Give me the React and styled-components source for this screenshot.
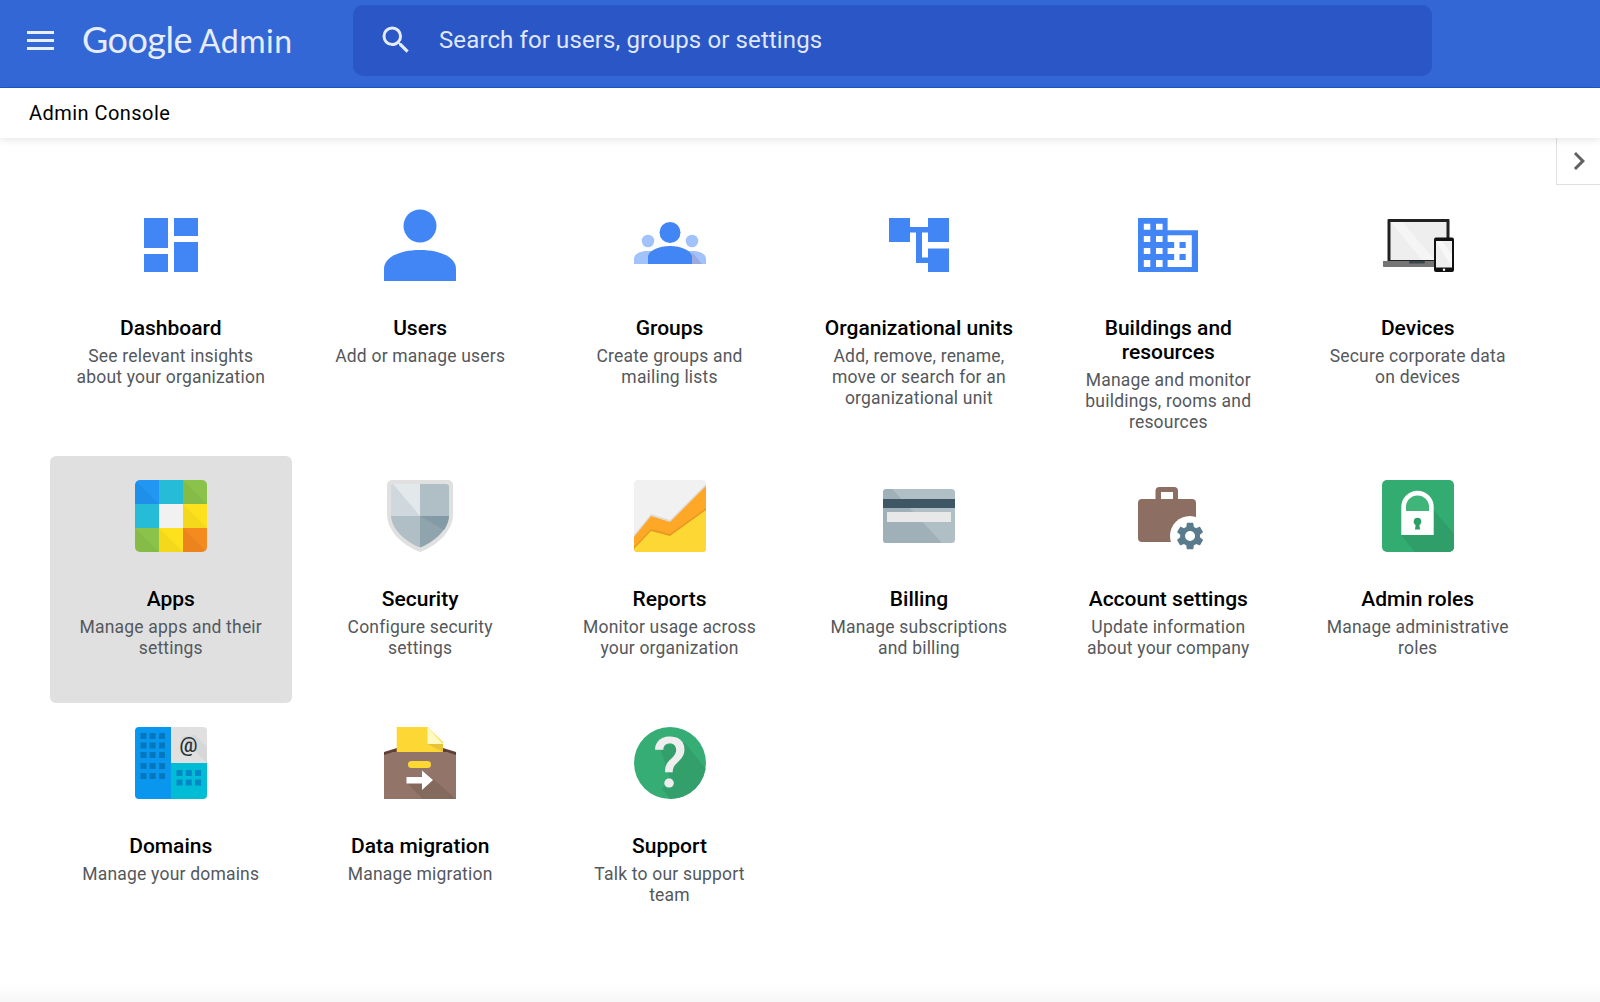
import React from "react";
import styled, { createGlobalStyle } from "styled-components";

const Global = createGlobalStyle`
  html, body { margin: 0; padding: 0; background: #fff; height: 100%; }
  #root { height: 100%; }
  * { box-sizing: border-box; }
`;

const Page = styled.div`
  position: relative;
  height: 1002px;
  overflow: hidden;
  display: flex;
  flex-direction: column;
  font-family: Roboto, "Liberation Sans", sans-serif;
  background: #fff;
`;
const TopBar = styled.header`
  height: 88px;
  flex: none;
  display: flex;
  align-items: center;
  background: #3367d6;
  border-bottom: 1px solid #1a56cf;
`;
const MenuButton = styled.div`
  width: 27px;
  height: 19px;
  margin-left: 27px;
  margin-bottom: 6px;
  flex: none;
  display: flex;
  flex-direction: column;
  justify-content: space-between;
`;
const MenuBar = styled.span`
  display: block;
  height: 3px;
  background: #e9effb;
`;
const Logo = styled.div`
  width: 299px;
  padding-left: 28px;
  flex: none;
  display: flex;
  align-items: baseline;
  gap: 7px;
  color: #e6edfa;
  font-family: Lato, sans-serif;
  line-height: 44px;
  margin-bottom: 8px;
`;
const LogoWord = styled.span`
  font-size: ${(p) => p.$size};
  letter-spacing: ${(p) => p.$spacing};
`;
const SearchBox = styled.div`
  width: 1079px;
  height: 71px;
  margin-bottom: 7px;
  flex: none;
  display: flex;
  align-items: center;
  padding-left: 25px;
  gap: 25px;
  background: #2a56c6;
  border-radius: 10px;
  color: #dfe7f8;
  font-size: 24px;
  letter-spacing: 0.12px;
`;
const SearchIcon = styled.svg`
  width: 36px;
  height: 36px;
  flex: none;
  fill: #e6edfa;
`;
const SubBar = styled.div`
  position: relative;
  z-index: 2;
  height: 50px;
  flex: none;
  display: flex;
  align-items: center;
  padding-left: 29px;
  padding-bottom: 1px;
  background: #fff;
  box-shadow: 0 2px 8px rgba(0, 0, 0, 0.1);
  color: #000;
  font-size: 20px;
  letter-spacing: 0.45px;
`;
const SideToggle = styled.div`
  position: absolute;
  top: 138px;
  right: 0;
  width: 44px;
  height: 47px;
  display: flex;
  align-items: center;
  justify-content: center;
  background: #fff;
  border-left: 1px solid #e0e0e0;
  border-bottom: 1px solid #e0e0e0;
`;
const Chevron = styled.svg`
  width: 36px;
  height: 36px;
  fill: #616161;
`;
const Grid = styled.main`
  display: grid;
  grid-template-columns: repeat(6, 242.5px);
  column-gap: 6.9px;
  padding: 47px 0 0 49.5px;
`;
const Tile = styled.div`
  min-height: 247px;
  padding: 24px 24px 23px;
  display: flex;
  flex-direction: column;
  align-items: center;
  text-align: center;
  border-radius: 6px;
  background: ${(p) => (p.$active ? "#e0e0e0" : "transparent")};
`;
const IconSvg = styled.svg`
  width: 72px;
  height: 72px;
  flex: none;
  display: block;
  margin-bottom: 35px;
  overflow: visible;
`;
const Title = styled.div`
  font-size: 21px;
  font-weight: 500;
  line-height: 24px;
  color: #000;
`;
const Desc = styled.div`
  margin-top: 6px;
  font-size: 17.5px;
  line-height: 21px;
  color: #54585c;
  letter-spacing: 0.2px;
`;
const BottomFade = styled.div`
  margin-top: auto;
  height: 18px;
  flex: none;
  background: linear-gradient(#fff, #f7f7f7);
`;

const Svg = ({ children }) => <IconSvg viewBox="0 0 72 72">{children}</IconSvg>;

const blue = "#4285f4";

const DashboardIcon = () => (
  <Svg>
    <path fill={blue} d="M9 39h24V9H9zm0 24h24V45H9zm30 0h24V33H39zM39 9v18h24V9z" />
  </Svg>
);
const UsersIcon = () => (
  <Svg>
    <circle cx="36" cy="17" r="16.5" fill={blue} />
    <path fill={blue} d="M0 72V60C0 48 16 41 36 41s36 7 36 19v12z" />
  </Svg>
);
const GroupsIcon = () => (
  <Svg>
    <circle cx="14" cy="32" r="6.3" fill="#a1c2fa" />
    <circle cx="58" cy="32" r="6.3" fill="#a1c2fa" />
    <path fill="#a1c2fa" d="M0 55v-5c0-5 6-8 14-8h44c8 0 14 3 14 8v5z" />
    <path fill="#9aa9e0" d="M58 43l0 12h10z" />
    <circle cx="36" cy="23.5" r="10.5" fill={blue} />
    <path fill={blue} d="M14 55v-7c0-6 10-11 22-11s22 5 22 11v7z" />
  </Svg>
);
const OrgIcon = () => (
  <Svg>
    <path
      fill={blue}
      d="M6 9h21v9h18V9h21v24H45V23.5h-6V48.5h6V39.500h21V63H45v-9H33V23.500h-6V33H6z"
    />
  </Svg>
);
const BuildingIcon = () => (
  <Svg>
    <path
      fill={blue}
      fillRule="evenodd"
      d="M6 9h29.600v12.200H66V63H6zM11.800 14.700v6.100h6.500v-6.100zM24 14.700v6.100h6.600v-6.100zM11.800 27v6h6.500v-6zM24 27v6h6.600v-6zM11.800 39v6h6.500v-6zM24 39v6h6.600v-6zM11.800 51v7h6.500v-7zM24 51v7h6.600v-7zM35.600 26.200V33h6.600v6h-6.600v6h6.600v6h-6.600v7h24.200V26.200zM47.500 33h6.200v6h-6.200zM47.500 45h6.200v6h-6.200z"
    />
  </Svg>
);
const DevicesIcon = () => (
  <Svg>
    <rect x="5.500" y="10" width="62" height="44" rx="1" fill="#212121" />
    <rect x="8.500" y="13" width="56" height="38" fill="#eeeeee" />
    <path fill="#f5f5f5" d="M8.500 13h12l32 38H40z" />
    <path fill="#757575" d="M1 52h61v5c0 .6-.5 1-1 1H2c-.6 0-1-.4-1-1z" />
    <rect x="27" y="52" width="16" height="2.500" rx="1" fill="#37474f" />
    <rect x="52" y="28.500" width="20" height="34.500" rx="2" fill="#111" />
    <rect x="54" y="32" width="16" height="26.500" fill="#eeeeee" />
    <path fill="#f7f7f7" d="M54 32h6l10 14v12.500z" />
    <circle cx="62" cy="60.800" r="1.200" fill="#fff" />
  </Svg>
);
const AppsIcon = () => (
  <Svg>
    <defs>
      <clipPath id="apps">
        <rect width="72" height="72" rx="5" />
      </clipPath>
    </defs>
    <g clipPath="url(#apps)">
      <rect width="24" height="24" fill="#2196f3" />
      <rect x="24" width="24" height="24" fill="#26bcd7" />
      <rect x="48" width="24" height="24" fill="#8bc34a" />
      <rect y="24" width="24" height="24" fill="#26bcd7" />
      <rect x="24" y="24" width="24" height="24" fill="#f1f1f1" />
      <rect x="48" y="24" width="24" height="24" fill="#fde11d" />
      <rect y="48" width="24" height="24" fill="#8bc34a" />
      <rect x="24" y="48" width="24" height="24" fill="#fde11d" />
      <rect x="48" y="48" width="24" height="24" fill="#f58a1f" />
      <path fill="#000" opacity=".04" d="M48 0l24 24H48zM48 24l24 24H48zM0 48l24 24H0zM24 48l24 24H24zM48 48l24 24H48zM0 0l24 24H0z" />
    </g>
  </Svg>
);
const SecurityIcon = () => (
  <Svg>
    <path fill="#e0e0e0" d="M8 0h56a5 5 0 0 1 5 5v29c0 18-17 32-33 38C20 66 3 52 3 34V5a5 5 0 0 1 5-5z" />
    <path fill="#cfd8dc" d="M10 4h26v32H7V7a3 3 0 0 1 3-3z" />
    <path fill="#e3e8ea" d="M9 4h27v32z" />
    <path fill="#b0bec5" d="M36 4h26a3 3 0 0 1 3 3v29H36z" />
    <path fill="#b0bec5" d="M7 36h29v31.500C22 62 8 50 7 36z" />
    <path fill="#90a4ae" d="M36 36h29c-1 14-15 26-29 31.500z" />
    <path fill="#829ba6" d="M36 36h29c-.5 6-2.500 10-5 14z" />
  </Svg>
);
const ReportsIcon = () => (
  <Svg>
    <defs>
      <clipPath id="reports">
        <rect width="72" height="72" rx="4" />
      </clipPath>
    </defs>
    <g clipPath="url(#reports)">
      <rect width="72" height="72" fill="#f1f1f1" />
      <path fill="#dcdcdc" d="M0 55L17 34 36 40 72 4V8L36 44 17 38 0 59z" />
      <path fill="#ffa726" d="M0 57L17 36 36 42 72 6V72H0z" />
      <path fill="#e69a22" d="M0 67L17 49 36 54 72 28V32L36 58 17 53 0 71z" />
      <path fill="#fdd835" d="M0 69L17 51 36 56 72 30V72H0z" />
    </g>
  </Svg>
);
const BillingIcon = () => (
  <Svg>
    <defs>
      <clipPath id="billing">
        <rect y="9" width="72" height="54" rx="3.500" />
      </clipPath>
    </defs>
    <g clipPath="url(#billing)">
      <rect y="9" width="72" height="54" fill="#b0bec5" />
      <path fill="#9fb0b9" d="M0 9h9l50 54H0z" />
      <rect y="19" width="72" height="9" fill="#3f5765" />
      <rect x="4" y="32" width="64" height="10" fill="#e8e8e8" />
    </g>
  </Svg>
);
const AccountIcon = () => (
  <Svg>
    <path
      fill="#8d6e63"
      fillRule="evenodd"
      d="M23.500 19v-8a4 4 0 0 1 4-4H42a4 4 0 0 1 4 4v8h14a4 4 0 0 1 4 4v35a4 4 0 0 1-4 4H10a4 4 0 0 1-4-4V23a4 4 0 0 1 4-4zM29 12v7h12v-7z"
    />
    <circle cx="58" cy="56" r="20" fill="#fff" />
    <g transform="translate(41.500 39.500) scale(1.38)" fill="#5a7b8c">
      <path d="M19.140 12.940c.04-.3.06-.61.06-.94 0-.32-.02-.64-.07-.94l2.030-1.580c.18-.14.23-.41.12-.61l-1.920-3.320c-.12-.22-.37-.29-.59-.22l-2.390.96c-.5-.38-1.030-.7-1.620-.94l-.36-2.540c-.04-.24-.24-.41-.48-.41h-3.840c-.24 0-.43.17-.47.41l-.36 2.540c-.59.24-1.130.57-1.620.94l-2.390-.96c-.22-.08-.47 0-.59.22L2.740 8.870c-.12.21-.08.47.12.61l2.030 1.580c-.05.3-.09.63-.09.94s.02.64.07.94l-2.030 1.580c-.18.14-.23.41-.12.61l1.920 3.320c.12.22.37.29.59.22l2.390-.96c.5.38 1.030.7 1.620.94l.36 2.540c.05.24.24.41.48.41h3.840c.24 0 .44-.17.47-.41l.36-2.540c.59-.24 1.130-.56 1.620-.94l2.390.96c.22.08.47 0 .59-.22l1.920-3.320c.12-.22.07-.47-.12-.61l-2.010-1.580zM12 15.600c-1.980 0-3.600-1.620-3.600-3.600s1.620-3.600 3.600-3.600 3.600 1.620 3.600 3.600-1.620 3.600-3.600 3.600z" />
    </g>
  </Svg>
);
const RolesIcon = () => (
  <Svg>
    <defs>
      <clipPath id="roles">
        <rect width="72" height="72" rx="5" />
      </clipPath>
    </defs>
    <g clipPath="url(#roles)">
      <rect width="72" height="72" fill="#33ac71" />
      <path fill="#2f9e69" d="M52 30l20 24v18H33L19 55z" />
      <path fill="#fff" d="M19.300 55V27a16.200 16.200 0 0 1 32.400 0v28z" />
      <path fill="#3fb57a" d="M24 31v-4a11.500 11.500 0 0 1 23 0v4z" />
      <circle cx="35.500" cy="41.500" r="3.800" fill="#2e9e68" />
      <path fill="#2e9e68" d="M33.800 43h3.400l.8 6.500h-5z" />
    </g>
  </Svg>
);
const DomainsIcon = () => (
  <Svg>
    <defs>
      <clipPath id="domains">
        <rect width="72" height="72" rx="4" />
      </clipPath>
    </defs>
    <g clipPath="url(#domains)">
      <rect width="36" height="72" fill="#0896ee" />
      <rect x="36" width="36" height="36" fill="#e0e0e0" />
      <path fill="#d0d0d0" d="M46 10l26 26V20L60 8z" opacity=".6" />
      <rect x="36" y="36" width="36" height="36" fill="#00bcd4" />
      <path fill="#0277bd" d="M5.500 6h6v6h-6zM14.600 6h6v6h-6zM24 6h6v6h-6zM5.500 15.500h6v6h-6zM14.600 15.500h6v6h-6zM24 15.500h6v6h-6zM5.500 25h6v6h-6zM14.600 25h6v6h-6zM24 25h6v6h-6zM5.500 36h6v6h-6zM14.600 36h6v6h-6zM24 36h6v6h-6zM5.500 46h6v6h-6zM14.600 46h6v6h-6zM24 46h6v6h-6z" />
      <path fill="#0288c9" d="M41.500 43h6v6h-6zM50.800 43h6v6h-6zM60 43h6v6h-6zM41.500 52.500h6v6h-6zM50.800 52.500h6v6h-6zM60 52.500h6v6h-6z" />
      <text x="53.500" y="25" textAnchor="middle" fontFamily="Roboto, sans-serif" fontWeight="500" fontSize="20" fill="#263238">@</text>
    </g>
  </Svg>
);
const MigrationIcon = () => (
  <Svg>
    <defs>
      <clipPath id="migration">
        <path d="M0 72V28l12-4h48l12 4v44z" />
      </clipPath>
    </defs>
    <path fill="#5d4037" d="M0 25l13-4h46l13 4v3H0z" />
    <path fill="#fdd835" d="M12.700 0h30.800L59 15v10H12.700z" />
    <path fill="#fff9c4" d="M43.500 0L59 17H43.500z" />
    <path fill="#e8c237" d="M43.500 17H59v8z" />
    <g clipPath="url(#migration)">
      <rect y="25" width="72" height="47" fill="#927568" />
      <path fill="#7c6156" d="M24 57l18-11 30 26H39z" opacity=".6" />
    </g>
    <rect x="24" y="34" width="23" height="7" rx="3.500" fill="#fdd835" />
    <path fill="#fff" d="M22.500 50H38v-6.500L49 53 38 63V56.500H22.500z" />
  </Svg>
);
const SupportIcon = () => (
  <Svg>
    <defs>
      <clipPath id="support">
        <circle cx="36" cy="36" r="36" />
      </clipPath>
    </defs>
    <g clipPath="url(#support)">
      <rect width="72" height="72" fill="#36ad75" />
      <path fill="#33a06c" d="M25 18l26-2 24 30v30H40L28 62l8-10z" />
    </g>
    <text x="36" y="60" textAnchor="middle" fontFamily="Roboto, sans-serif" fontWeight="500" fontSize="70" fill="#eeeeee">?</text>
  </Svg>
);

const items = [
  { title: "Dashboard", desc: "See relevant insights about your organization", Icon: DashboardIcon },
  { title: "Users", desc: "Add or manage users", Icon: UsersIcon },
  { title: "Groups", desc: "Create groups and mailing lists", Icon: GroupsIcon },
  { title: "Organizational units", desc: "Add, remove, rename, move or search for an organizational unit", Icon: OrgIcon },
  { title: "Buildings and resources", desc: "Manage and monitor buildings, rooms and resources", Icon: BuildingIcon },
  { title: "Devices", desc: "Secure corporate data on devices", Icon: DevicesIcon },
  { title: "Apps", desc: "Manage apps and their settings", Icon: AppsIcon, active: true },
  { title: "Security", desc: "Configure security settings", Icon: SecurityIcon },
  { title: "Reports", desc: "Monitor usage across your organization", Icon: ReportsIcon },
  { title: "Billing", desc: "Manage subscriptions and billing", Icon: BillingIcon },
  { title: "Account settings", desc: "Update information about your company", Icon: AccountIcon },
  { title: "Admin roles", desc: "Manage administrative roles", Icon: RolesIcon },
  { title: "Domains", desc: "Manage your domains", Icon: DomainsIcon },
  { title: "Data migration", desc: "Manage migration", Icon: MigrationIcon },
  { title: "Support", desc: "Talk to our support team", Icon: SupportIcon },
];

export default function App() {
  return (
    <Page>
      <Global />
      <TopBar>
        <MenuButton>
          <MenuBar />
          <MenuBar />
          <MenuBar />
        </MenuButton>
        <Logo>
          <LogoWord $size="36px" $spacing="-0.5px">Google</LogoWord>
          <LogoWord $size="32px" $spacing="0.5px">Admin</LogoWord>
        </Logo>
        <SearchBox>
          <SearchIcon viewBox="0 0 24 24">
            <path d="M15.500 14h-.79l-.28-.27A6.470 6.470 0 0 0 16 9.500 6.500 6.500 0 1 0 9.500 16c1.610 0 3.090-.59 4.230-1.570l.27.28v.79l5 4.990L20.490 19l-4.990-5zm-6 0C7.010 14 5 11.990 5 9.500S7.010 5 9.500 5 14 7.010 14 9.500 11.990 14 9.500 14z" />
          </SearchIcon>
          Search for users, groups or settings
        </SearchBox>
      </TopBar>
      <SubBar>Admin Console</SubBar>
      <SideToggle>
        <Chevron viewBox="0 0 24 24">
          <path d="M8.590 16.590L13.170 12 8.590 7.410 10 6l6 6-6 6z" />
        </Chevron>
      </SideToggle>
      <Grid>
        {items.map(({ title, desc, Icon, active }) => (
          <Tile key={title} $active={active}>
            <Icon />
            <Title>{title}</Title>
            <Desc>{desc}</Desc>
          </Tile>
        ))}
      </Grid>
      <BottomFade />
    </Page>
  );
}
